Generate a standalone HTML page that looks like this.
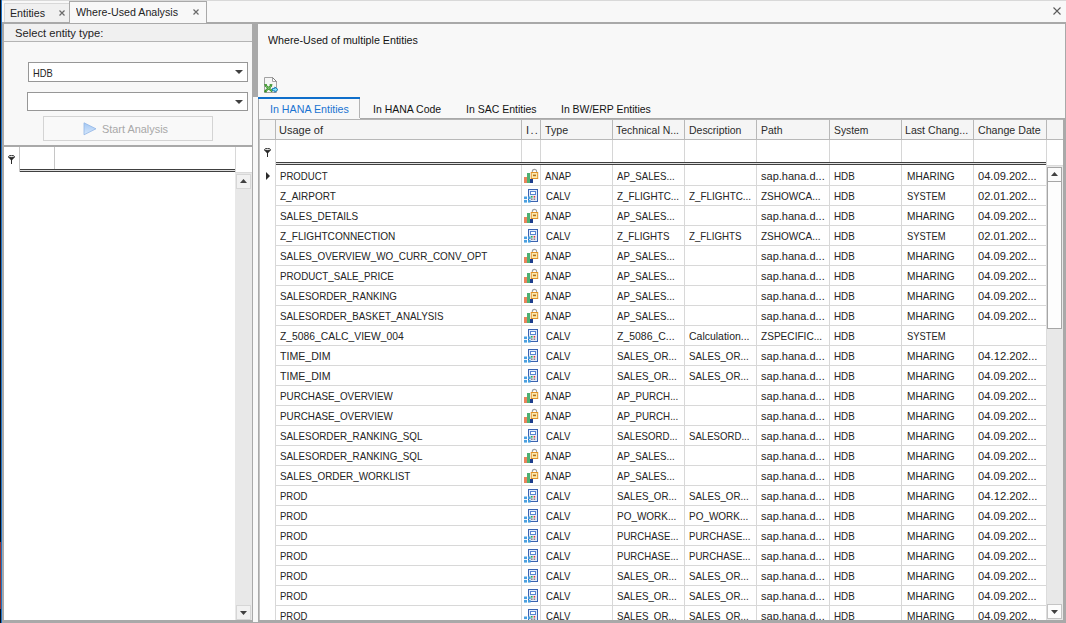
<!DOCTYPE html>
<html><head><meta charset="utf-8"><title>Where-Used Analysis</title>
<style>
*{box-sizing:border-box;margin:0;padding:0}
html,body{width:1066px;height:623px;overflow:hidden;background:#f8f8f8}
body{position:relative;font-family:"Liberation Sans",sans-serif;font-size:11px;color:#1c1c1c;line-height:13px}
.a{position:absolute}
.t{position:absolute;white-space:nowrap;height:13px;line-height:13px;transform-origin:0 50%;display:block}
</style></head><body>

<div class="a" style="left:0px;top:0px;width:1066px;height:1px;background:#d9d9d9;"></div>
<div class="a" style="left:0px;top:0px;width:1px;height:623px;background:#0a0c14;"></div>
<div class="a" style="left:0px;top:542px;width:1px;height:67px;background:#98302a;"></div>
<div class="a" style="left:1px;top:0px;width:1px;height:623px;background:#1f74c8;"></div>
<div class="a" style="left:4px;top:3px;width:65px;height:19px;background:#f0f0f0;border:1px solid #d8d8d8;border-bottom:none;border-right:none"></div>
<div class="a" style="left:69px;top:1px;width:138px;height:22px;background:#f8f8f8;border:1px solid #a9a9a9;border-bottom:none"></div>
<svg class="a" style="left:59px;top:10px" width="6" height="6" viewBox="0 0 6 6"><path d="M0.5 0.5L5.5 5.5M5.5 0.5L0.5 5.5" stroke="#6a6a6a" stroke-width="1.2" fill="none"/></svg>
<svg class="a" style="left:193px;top:9px" width="6" height="6" viewBox="0 0 6 6"><path d="M0.5 0.5L5.5 5.5M5.5 0.5L0.5 5.5" stroke="#6a6a6a" stroke-width="1.2" fill="none"/></svg>
<svg class="a" style="left:1053px;top:7px" width="8" height="8" viewBox="0 0 8 8"><path d="M0.5 0.5L7.5 7.5M7.5 0.5L0.5 7.5" stroke="#5a5a5a" stroke-width="1.1" fill="none"/></svg>
<div class="a" style="left:2px;top:22px;width:68px;height:2px;background:#a9a9a9;"></div>
<div class="a" style="left:70px;top:23px;width:136px;height:1px;background:#a9a9a9;"></div>
<div class="a" style="left:206px;top:22px;width:860px;height:2px;background:#a9a9a9;"></div>
<div class="a" style="left:2px;top:22px;width:2px;height:601px;background:#a9a9a9;"></div>
<div class="a" style="left:2px;top:620px;width:251px;height:3px;background:#a9a9a9;"></div>
<div class="a" style="left:253px;top:622px;width:5px;height:1px;background:#a9a9a9;"></div>
<div class="a" style="left:4px;top:24px;width:248px;height:17px;background:#f0f0f0;"></div>
<div class="a" style="left:4px;top:41px;width:248px;height:1px;background:#b4b4b4;"></div>
<div class="a" style="left:28px;top:62px;width:220px;height:20px;background:#ffffff;border:1px solid #979797"></div>
<svg class="a" style="left:235px;top:70px" width="8" height="4" viewBox="0 0 8 4"><path d="M0 0H8L4.0 4Z" fill="#404040"/></svg>
<div class="a" style="left:27px;top:92px;width:221px;height:19px;background:#ffffff;border:1px solid #979797"></div>
<svg class="a" style="left:235px;top:100px" width="8" height="4" viewBox="0 0 8 4"><path d="M0 0H8L4.0 4Z" fill="#404040"/></svg>
<div class="a" style="left:43px;top:116px;width:170px;height:25px;background:#f9f9f9;border:1px solid #d4d4d4"></div>
<svg class="a" style="left:83px;top:122px" width="14" height="14" viewBox="0 0 14 14"><defs><linearGradient id="pg" x1="0" y1="0" x2="0" y2="1"><stop offset="0" stop-color="#a4c8f4"/><stop offset="1" stop-color="#d6e7fb"/></linearGradient></defs><path d="M1 0.8L13 6.8L1 12.8Z" fill="url(#pg)" stroke="#93b6e6" stroke-width="0.8"/></svg>
<div class="a" style="left:4px;top:145px;width:248px;height:2px;background:#a9a9a9;"></div>
<div class="a" style="left:4px;top:147px;width:248px;height:473px;background:#ffffff;"></div>
<div class="a" style="left:19px;top:147px;width:1px;height:25px;background:#c6c6c6;"></div>
<div class="a" style="left:54px;top:147px;width:1px;height:25px;background:#c6c6c6;"></div>
<div class="a" style="left:235px;top:147px;width:1px;height:25px;background:#d8d8d8;"></div>
<div class="a" style="left:20px;top:169px;width:215px;height:1px;background:#404040;"></div>
<div class="a" style="left:20px;top:170px;width:215px;height:1px;background:#e0e0e0;"></div>
<div class="a" style="left:20px;top:171px;width:215px;height:1px;background:#404040;"></div>
<svg class="a" style="left:8px;top:155px" width="7" height="9" viewBox="0 0 7 9"><ellipse cx="3.5" cy="1.6" rx="3" ry="1.2" fill="#e8e8e8" stroke="#2a2a2a" stroke-width="0.9"/><path d="M0.2 1.9L3.5 5.6L6.8 1.9Q3.5 3.2 0.2 1.9Z" fill="#2a2a2a" stroke="#2a2a2a" stroke-width="0.4"/><rect x="3" y="4.4" width="1" height="4.6" fill="#2a2a2a"/></svg>
<div class="a" style="left:235px;top:172px;width:17px;height:448px;background:#e8e8e8;"></div>
<div class="a" style="left:235px;top:172px;width:17px;height:1px;background:#dadada;"></div>
<div class="a" style="left:236px;top:174px;width:15px;height:15px;background:#f1f1f1;border:1px solid #d6d6d6"></div>
<svg class="a" style="left:240px;top:179px" width="7" height="4" viewBox="0 0 7 4"><path d="M0 4H7L3.5 0Z" fill="#404040"/></svg>
<div class="a" style="left:236px;top:605px;width:15px;height:15px;background:#f1f1f1;border:1px solid #d6d6d6"></div>
<svg class="a" style="left:240px;top:611px" width="7" height="4" viewBox="0 0 7 4"><path d="M0 0H7L3.5 4Z" fill="#404040"/></svg>
<div class="a" style="left:252px;top:22px;width:1px;height:601px;background:#a9a9a9;"></div>
<div class="a" style="left:252px;top:24px;width:6px;height:73px;background:#a9a9a9;"></div>
<div class="a" style="left:258px;top:97px;width:1px;height:526px;background:#a9a9a9;"></div>
<div class="a" style="left:1065px;top:22px;width:1px;height:601px;background:#a9a9a9;"></div>
<svg class="a" style="left:263px;top:77px" width="16" height="16" viewBox="0 0 16 16"><path d="M1.5 0.5H9.5L13.5 4.5V15.5H1.5Z" fill="#f6f6f6" stroke="#a2a2a2" stroke-width="1"/><path d="M9.5 0.5V4.5H13.5" fill="#ffffff" stroke="#a2a2a2" stroke-width="1"/><path d="M9.5 0.5L13.5 4.5" stroke="#7c7c7c" stroke-width="1"/><path d="M2.2 8.2L9.4 14.4M8.6 8.2L2 14.4" stroke="#2c8a1c" stroke-width="2.1"/><path d="M1.2 7.8H4M6.6 7.8H9.4M1.2 14.7H3.8" stroke="#2c8a1c" stroke-width="1.1"/><path d="M2.8 8.8L8.8 13.9M8 8.8L2.8 13.8" stroke="#a6dc96" stroke-width="0.7"/><path d="M9.4 11.4H11.8V10L15 12.6L11.8 15.3V13.8H9.4Z" fill="#7fe6f7" stroke="#1a7ab8" stroke-width="1"/></svg>
<div class="a" style="left:258px;top:97px;width:102px;height:2px;background:#0f6fcb;"></div>
<div class="a" style="left:359px;top:99px;width:1px;height:19px;background:#b4b4b4;"></div>
<div class="a" style="left:360px;top:118px;width:706px;height:1px;background:#a9a9a9;"></div>
<div class="a" style="left:259px;top:119px;width:805px;height:1px;background:#b4b4b4;"></div>
<div class="a" style="left:259px;top:119px;width:1px;height:501px;background:#c4c4c4;"></div>
<div class="a" style="left:1063px;top:118px;width:3px;height:505px;background:#a9a9a9;"></div>
<div class="a" style="left:260px;top:120px;width:803px;height:19px;background:#f5f5f5;"></div>
<div class="a" style="left:260px;top:139px;width:803px;height:1px;background:#b8b8b8;"></div>
<div class="a" style="left:260px;top:140px;width:803px;height:25px;background:#ffffff;"></div>
<div class="a" style="left:260px;top:165px;width:786px;height:455px;background:#ffffff;"></div>
<div class="a" style="left:275px;top:120px;width:1px;height:19px;background:#b8b8b8;"></div>
<div class="a" style="left:275px;top:140px;width:1px;height:25px;background:#d6d6d6;"></div>
<div class="a" style="left:521px;top:120px;width:1px;height:19px;background:#b8b8b8;"></div>
<div class="a" style="left:521px;top:140px;width:1px;height:25px;background:#d6d6d6;"></div>
<div class="a" style="left:540px;top:120px;width:1px;height:19px;background:#b8b8b8;"></div>
<div class="a" style="left:540px;top:140px;width:1px;height:25px;background:#d6d6d6;"></div>
<div class="a" style="left:612px;top:120px;width:1px;height:19px;background:#b8b8b8;"></div>
<div class="a" style="left:612px;top:140px;width:1px;height:25px;background:#d6d6d6;"></div>
<div class="a" style="left:684px;top:120px;width:1px;height:19px;background:#b8b8b8;"></div>
<div class="a" style="left:684px;top:140px;width:1px;height:25px;background:#d6d6d6;"></div>
<div class="a" style="left:756px;top:120px;width:1px;height:19px;background:#b8b8b8;"></div>
<div class="a" style="left:756px;top:140px;width:1px;height:25px;background:#d6d6d6;"></div>
<div class="a" style="left:829px;top:120px;width:1px;height:19px;background:#b8b8b8;"></div>
<div class="a" style="left:829px;top:140px;width:1px;height:25px;background:#d6d6d6;"></div>
<div class="a" style="left:901px;top:120px;width:1px;height:19px;background:#b8b8b8;"></div>
<div class="a" style="left:901px;top:140px;width:1px;height:25px;background:#d6d6d6;"></div>
<div class="a" style="left:973px;top:120px;width:1px;height:19px;background:#b8b8b8;"></div>
<div class="a" style="left:973px;top:140px;width:1px;height:25px;background:#d6d6d6;"></div>
<div class="a" style="left:1046px;top:120px;width:1px;height:19px;background:#b8b8b8;"></div>
<div class="a" style="left:1046px;top:140px;width:1px;height:25px;background:#d6d6d6;"></div>
<div class="a" style="left:276px;top:162px;width:770px;height:1px;background:#404040;"></div>
<div class="a" style="left:276px;top:163px;width:770px;height:1px;background:#e0e0e0;"></div>
<div class="a" style="left:276px;top:164px;width:770px;height:1px;background:#404040;"></div>
<svg class="a" style="left:264px;top:148px" width="7" height="9" viewBox="0 0 7 9"><ellipse cx="3.5" cy="1.6" rx="3" ry="1.2" fill="#e8e8e8" stroke="#2a2a2a" stroke-width="0.9"/><path d="M0.2 1.9L3.5 5.6L6.8 1.9Q3.5 3.2 0.2 1.9Z" fill="#2a2a2a" stroke="#2a2a2a" stroke-width="0.4"/><rect x="3" y="4.4" width="1" height="4.6" fill="#2a2a2a"/></svg>
<svg class="a" style="left:266px;top:172px" width="4" height="8" viewBox="0 0 4 8"><path d="M0 0L4 4L0 8Z" fill="#2a2a2a"/></svg>
<svg class="a" style="left:523px;top:168px" width="16" height="16" viewBox="0 0 16 16"><rect x="1" y="9" width="3" height="6" fill="#e9835c"/><rect x="4" y="5" width="3" height="10" fill="#4fb072"/><rect x="7" y="11" width="3" height="4" fill="#1e3e8e"/><path d="M9.3 5V3.5a2.15 2.15 0 0 1 4.3 0V5" fill="none" stroke="#a0a0a0" stroke-width="1.1"/><rect x="8.2" y="4.5" width="6.5" height="6" fill="#fdeab0" stroke="#e0922c" stroke-width="1"/><rect x="10" y="6.6" width="3" height="1.6" fill="#b8741c"/></svg>
<div class="a" style="left:276px;top:185px;width:770px;height:1px;background:#d8d8d8;"></div>
<svg class="a" style="left:523px;top:188px" width="16" height="16" viewBox="0 0 16 16"><rect x="5.5" y="1.5" width="9" height="12" fill="#e4ecfa" stroke="#3a62b0" stroke-width="1"/><rect x="7.5" y="3.5" width="5" height="3" fill="#ffffff" stroke="#5a84d0" stroke-width="1"/><rect x="8" y="8" width="1.6" height="1.6" fill="#2fb34a"/><rect x="10.6" y="8" width="1.6" height="1.6" fill="#e03a3a"/><rect x="8" y="10.4" width="1.6" height="1.6" fill="#8a8a8a"/><rect x="10.6" y="10.4" width="1.6" height="1.6" fill="#8a8a8a"/><rect x="1" y="8.5" width="3" height="2.6" fill="#4aa0e0"/><rect x="5" y="8.5" width="2.6" height="2.6" fill="#4aa0e0"/><rect x="1" y="12" width="3" height="2.6" fill="#4aa0e0"/><rect x="5" y="12" width="2.6" height="2.6" fill="#4aa0e0"/></svg>
<div class="a" style="left:276px;top:205px;width:770px;height:1px;background:#d8d8d8;"></div>
<svg class="a" style="left:523px;top:208px" width="16" height="16" viewBox="0 0 16 16"><rect x="1" y="9" width="3" height="6" fill="#e9835c"/><rect x="4" y="5" width="3" height="10" fill="#4fb072"/><rect x="7" y="11" width="3" height="4" fill="#1e3e8e"/><path d="M9.3 5V3.5a2.15 2.15 0 0 1 4.3 0V5" fill="none" stroke="#a0a0a0" stroke-width="1.1"/><rect x="8.2" y="4.5" width="6.5" height="6" fill="#fdeab0" stroke="#e0922c" stroke-width="1"/><rect x="10" y="6.6" width="3" height="1.6" fill="#b8741c"/></svg>
<div class="a" style="left:276px;top:225px;width:770px;height:1px;background:#d8d8d8;"></div>
<svg class="a" style="left:523px;top:228px" width="16" height="16" viewBox="0 0 16 16"><rect x="5.5" y="1.5" width="9" height="12" fill="#e4ecfa" stroke="#3a62b0" stroke-width="1"/><rect x="7.5" y="3.5" width="5" height="3" fill="#ffffff" stroke="#5a84d0" stroke-width="1"/><rect x="8" y="8" width="1.6" height="1.6" fill="#2fb34a"/><rect x="10.6" y="8" width="1.6" height="1.6" fill="#e03a3a"/><rect x="8" y="10.4" width="1.6" height="1.6" fill="#8a8a8a"/><rect x="10.6" y="10.4" width="1.6" height="1.6" fill="#8a8a8a"/><rect x="1" y="8.5" width="3" height="2.6" fill="#4aa0e0"/><rect x="5" y="8.5" width="2.6" height="2.6" fill="#4aa0e0"/><rect x="1" y="12" width="3" height="2.6" fill="#4aa0e0"/><rect x="5" y="12" width="2.6" height="2.6" fill="#4aa0e0"/></svg>
<div class="a" style="left:276px;top:245px;width:770px;height:1px;background:#d8d8d8;"></div>
<svg class="a" style="left:523px;top:248px" width="16" height="16" viewBox="0 0 16 16"><rect x="1" y="9" width="3" height="6" fill="#e9835c"/><rect x="4" y="5" width="3" height="10" fill="#4fb072"/><rect x="7" y="11" width="3" height="4" fill="#1e3e8e"/><path d="M9.3 5V3.5a2.15 2.15 0 0 1 4.3 0V5" fill="none" stroke="#a0a0a0" stroke-width="1.1"/><rect x="8.2" y="4.5" width="6.5" height="6" fill="#fdeab0" stroke="#e0922c" stroke-width="1"/><rect x="10" y="6.6" width="3" height="1.6" fill="#b8741c"/></svg>
<div class="a" style="left:276px;top:265px;width:770px;height:1px;background:#d8d8d8;"></div>
<svg class="a" style="left:523px;top:268px" width="16" height="16" viewBox="0 0 16 16"><rect x="1" y="9" width="3" height="6" fill="#e9835c"/><rect x="4" y="5" width="3" height="10" fill="#4fb072"/><rect x="7" y="11" width="3" height="4" fill="#1e3e8e"/><path d="M9.3 5V3.5a2.15 2.15 0 0 1 4.3 0V5" fill="none" stroke="#a0a0a0" stroke-width="1.1"/><rect x="8.2" y="4.5" width="6.5" height="6" fill="#fdeab0" stroke="#e0922c" stroke-width="1"/><rect x="10" y="6.6" width="3" height="1.6" fill="#b8741c"/></svg>
<div class="a" style="left:276px;top:285px;width:770px;height:1px;background:#d8d8d8;"></div>
<svg class="a" style="left:523px;top:288px" width="16" height="16" viewBox="0 0 16 16"><rect x="1" y="9" width="3" height="6" fill="#e9835c"/><rect x="4" y="5" width="3" height="10" fill="#4fb072"/><rect x="7" y="11" width="3" height="4" fill="#1e3e8e"/><path d="M9.3 5V3.5a2.15 2.15 0 0 1 4.3 0V5" fill="none" stroke="#a0a0a0" stroke-width="1.1"/><rect x="8.2" y="4.5" width="6.5" height="6" fill="#fdeab0" stroke="#e0922c" stroke-width="1"/><rect x="10" y="6.6" width="3" height="1.6" fill="#b8741c"/></svg>
<div class="a" style="left:276px;top:305px;width:770px;height:1px;background:#d8d8d8;"></div>
<svg class="a" style="left:523px;top:308px" width="16" height="16" viewBox="0 0 16 16"><rect x="1" y="9" width="3" height="6" fill="#e9835c"/><rect x="4" y="5" width="3" height="10" fill="#4fb072"/><rect x="7" y="11" width="3" height="4" fill="#1e3e8e"/><path d="M9.3 5V3.5a2.15 2.15 0 0 1 4.3 0V5" fill="none" stroke="#a0a0a0" stroke-width="1.1"/><rect x="8.2" y="4.5" width="6.5" height="6" fill="#fdeab0" stroke="#e0922c" stroke-width="1"/><rect x="10" y="6.6" width="3" height="1.6" fill="#b8741c"/></svg>
<div class="a" style="left:276px;top:325px;width:770px;height:1px;background:#d8d8d8;"></div>
<svg class="a" style="left:523px;top:328px" width="16" height="16" viewBox="0 0 16 16"><rect x="5.5" y="1.5" width="9" height="12" fill="#e4ecfa" stroke="#3a62b0" stroke-width="1"/><rect x="7.5" y="3.5" width="5" height="3" fill="#ffffff" stroke="#5a84d0" stroke-width="1"/><rect x="8" y="8" width="1.6" height="1.6" fill="#2fb34a"/><rect x="10.6" y="8" width="1.6" height="1.6" fill="#e03a3a"/><rect x="8" y="10.4" width="1.6" height="1.6" fill="#8a8a8a"/><rect x="10.6" y="10.4" width="1.6" height="1.6" fill="#8a8a8a"/><rect x="1" y="8.5" width="3" height="2.6" fill="#4aa0e0"/><rect x="5" y="8.5" width="2.6" height="2.6" fill="#4aa0e0"/><rect x="1" y="12" width="3" height="2.6" fill="#4aa0e0"/><rect x="5" y="12" width="2.6" height="2.6" fill="#4aa0e0"/></svg>
<div class="a" style="left:276px;top:345px;width:770px;height:1px;background:#d8d8d8;"></div>
<svg class="a" style="left:523px;top:348px" width="16" height="16" viewBox="0 0 16 16"><rect x="5.5" y="1.5" width="9" height="12" fill="#e4ecfa" stroke="#3a62b0" stroke-width="1"/><rect x="7.5" y="3.5" width="5" height="3" fill="#ffffff" stroke="#5a84d0" stroke-width="1"/><rect x="8" y="8" width="1.6" height="1.6" fill="#2fb34a"/><rect x="10.6" y="8" width="1.6" height="1.6" fill="#e03a3a"/><rect x="8" y="10.4" width="1.6" height="1.6" fill="#8a8a8a"/><rect x="10.6" y="10.4" width="1.6" height="1.6" fill="#8a8a8a"/><rect x="1" y="8.5" width="3" height="2.6" fill="#4aa0e0"/><rect x="5" y="8.5" width="2.6" height="2.6" fill="#4aa0e0"/><rect x="1" y="12" width="3" height="2.6" fill="#4aa0e0"/><rect x="5" y="12" width="2.6" height="2.6" fill="#4aa0e0"/></svg>
<div class="a" style="left:276px;top:365px;width:770px;height:1px;background:#d8d8d8;"></div>
<svg class="a" style="left:523px;top:368px" width="16" height="16" viewBox="0 0 16 16"><rect x="5.5" y="1.5" width="9" height="12" fill="#e4ecfa" stroke="#3a62b0" stroke-width="1"/><rect x="7.5" y="3.5" width="5" height="3" fill="#ffffff" stroke="#5a84d0" stroke-width="1"/><rect x="8" y="8" width="1.6" height="1.6" fill="#2fb34a"/><rect x="10.6" y="8" width="1.6" height="1.6" fill="#e03a3a"/><rect x="8" y="10.4" width="1.6" height="1.6" fill="#8a8a8a"/><rect x="10.6" y="10.4" width="1.6" height="1.6" fill="#8a8a8a"/><rect x="1" y="8.5" width="3" height="2.6" fill="#4aa0e0"/><rect x="5" y="8.5" width="2.6" height="2.6" fill="#4aa0e0"/><rect x="1" y="12" width="3" height="2.6" fill="#4aa0e0"/><rect x="5" y="12" width="2.6" height="2.6" fill="#4aa0e0"/></svg>
<div class="a" style="left:276px;top:385px;width:770px;height:1px;background:#d8d8d8;"></div>
<svg class="a" style="left:523px;top:388px" width="16" height="16" viewBox="0 0 16 16"><rect x="1" y="9" width="3" height="6" fill="#e9835c"/><rect x="4" y="5" width="3" height="10" fill="#4fb072"/><rect x="7" y="11" width="3" height="4" fill="#1e3e8e"/><path d="M9.3 5V3.5a2.15 2.15 0 0 1 4.3 0V5" fill="none" stroke="#a0a0a0" stroke-width="1.1"/><rect x="8.2" y="4.5" width="6.5" height="6" fill="#fdeab0" stroke="#e0922c" stroke-width="1"/><rect x="10" y="6.6" width="3" height="1.6" fill="#b8741c"/></svg>
<div class="a" style="left:276px;top:405px;width:770px;height:1px;background:#d8d8d8;"></div>
<svg class="a" style="left:523px;top:408px" width="16" height="16" viewBox="0 0 16 16"><rect x="1" y="9" width="3" height="6" fill="#e9835c"/><rect x="4" y="5" width="3" height="10" fill="#4fb072"/><rect x="7" y="11" width="3" height="4" fill="#1e3e8e"/><path d="M9.3 5V3.5a2.15 2.15 0 0 1 4.3 0V5" fill="none" stroke="#a0a0a0" stroke-width="1.1"/><rect x="8.2" y="4.5" width="6.5" height="6" fill="#fdeab0" stroke="#e0922c" stroke-width="1"/><rect x="10" y="6.6" width="3" height="1.6" fill="#b8741c"/></svg>
<div class="a" style="left:276px;top:425px;width:770px;height:1px;background:#d8d8d8;"></div>
<svg class="a" style="left:523px;top:428px" width="16" height="16" viewBox="0 0 16 16"><rect x="5.5" y="1.5" width="9" height="12" fill="#e4ecfa" stroke="#3a62b0" stroke-width="1"/><rect x="7.5" y="3.5" width="5" height="3" fill="#ffffff" stroke="#5a84d0" stroke-width="1"/><rect x="8" y="8" width="1.6" height="1.6" fill="#2fb34a"/><rect x="10.6" y="8" width="1.6" height="1.6" fill="#e03a3a"/><rect x="8" y="10.4" width="1.6" height="1.6" fill="#8a8a8a"/><rect x="10.6" y="10.4" width="1.6" height="1.6" fill="#8a8a8a"/><rect x="1" y="8.5" width="3" height="2.6" fill="#4aa0e0"/><rect x="5" y="8.5" width="2.6" height="2.6" fill="#4aa0e0"/><rect x="1" y="12" width="3" height="2.6" fill="#4aa0e0"/><rect x="5" y="12" width="2.6" height="2.6" fill="#4aa0e0"/></svg>
<div class="a" style="left:276px;top:445px;width:770px;height:1px;background:#d8d8d8;"></div>
<svg class="a" style="left:523px;top:448px" width="16" height="16" viewBox="0 0 16 16"><rect x="1" y="9" width="3" height="6" fill="#e9835c"/><rect x="4" y="5" width="3" height="10" fill="#4fb072"/><rect x="7" y="11" width="3" height="4" fill="#1e3e8e"/><path d="M9.3 5V3.5a2.15 2.15 0 0 1 4.3 0V5" fill="none" stroke="#a0a0a0" stroke-width="1.1"/><rect x="8.2" y="4.5" width="6.5" height="6" fill="#fdeab0" stroke="#e0922c" stroke-width="1"/><rect x="10" y="6.6" width="3" height="1.6" fill="#b8741c"/></svg>
<div class="a" style="left:276px;top:465px;width:770px;height:1px;background:#d8d8d8;"></div>
<svg class="a" style="left:523px;top:468px" width="16" height="16" viewBox="0 0 16 16"><rect x="1" y="9" width="3" height="6" fill="#e9835c"/><rect x="4" y="5" width="3" height="10" fill="#4fb072"/><rect x="7" y="11" width="3" height="4" fill="#1e3e8e"/><path d="M9.3 5V3.5a2.15 2.15 0 0 1 4.3 0V5" fill="none" stroke="#a0a0a0" stroke-width="1.1"/><rect x="8.2" y="4.5" width="6.5" height="6" fill="#fdeab0" stroke="#e0922c" stroke-width="1"/><rect x="10" y="6.6" width="3" height="1.6" fill="#b8741c"/></svg>
<div class="a" style="left:276px;top:485px;width:770px;height:1px;background:#d8d8d8;"></div>
<svg class="a" style="left:523px;top:488px" width="16" height="16" viewBox="0 0 16 16"><rect x="5.5" y="1.5" width="9" height="12" fill="#e4ecfa" stroke="#3a62b0" stroke-width="1"/><rect x="7.5" y="3.5" width="5" height="3" fill="#ffffff" stroke="#5a84d0" stroke-width="1"/><rect x="8" y="8" width="1.6" height="1.6" fill="#2fb34a"/><rect x="10.6" y="8" width="1.6" height="1.6" fill="#e03a3a"/><rect x="8" y="10.4" width="1.6" height="1.6" fill="#8a8a8a"/><rect x="10.6" y="10.4" width="1.6" height="1.6" fill="#8a8a8a"/><rect x="1" y="8.5" width="3" height="2.6" fill="#4aa0e0"/><rect x="5" y="8.5" width="2.6" height="2.6" fill="#4aa0e0"/><rect x="1" y="12" width="3" height="2.6" fill="#4aa0e0"/><rect x="5" y="12" width="2.6" height="2.6" fill="#4aa0e0"/></svg>
<div class="a" style="left:276px;top:505px;width:770px;height:1px;background:#d8d8d8;"></div>
<svg class="a" style="left:523px;top:508px" width="16" height="16" viewBox="0 0 16 16"><rect x="5.5" y="1.5" width="9" height="12" fill="#e4ecfa" stroke="#3a62b0" stroke-width="1"/><rect x="7.5" y="3.5" width="5" height="3" fill="#ffffff" stroke="#5a84d0" stroke-width="1"/><rect x="8" y="8" width="1.6" height="1.6" fill="#2fb34a"/><rect x="10.6" y="8" width="1.6" height="1.6" fill="#e03a3a"/><rect x="8" y="10.4" width="1.6" height="1.6" fill="#8a8a8a"/><rect x="10.6" y="10.4" width="1.6" height="1.6" fill="#8a8a8a"/><rect x="1" y="8.5" width="3" height="2.6" fill="#4aa0e0"/><rect x="5" y="8.5" width="2.6" height="2.6" fill="#4aa0e0"/><rect x="1" y="12" width="3" height="2.6" fill="#4aa0e0"/><rect x="5" y="12" width="2.6" height="2.6" fill="#4aa0e0"/></svg>
<div class="a" style="left:276px;top:525px;width:770px;height:1px;background:#d8d8d8;"></div>
<svg class="a" style="left:523px;top:528px" width="16" height="16" viewBox="0 0 16 16"><rect x="5.5" y="1.5" width="9" height="12" fill="#e4ecfa" stroke="#3a62b0" stroke-width="1"/><rect x="7.5" y="3.5" width="5" height="3" fill="#ffffff" stroke="#5a84d0" stroke-width="1"/><rect x="8" y="8" width="1.6" height="1.6" fill="#2fb34a"/><rect x="10.6" y="8" width="1.6" height="1.6" fill="#e03a3a"/><rect x="8" y="10.4" width="1.6" height="1.6" fill="#8a8a8a"/><rect x="10.6" y="10.4" width="1.6" height="1.6" fill="#8a8a8a"/><rect x="1" y="8.5" width="3" height="2.6" fill="#4aa0e0"/><rect x="5" y="8.5" width="2.6" height="2.6" fill="#4aa0e0"/><rect x="1" y="12" width="3" height="2.6" fill="#4aa0e0"/><rect x="5" y="12" width="2.6" height="2.6" fill="#4aa0e0"/></svg>
<div class="a" style="left:276px;top:545px;width:770px;height:1px;background:#d8d8d8;"></div>
<svg class="a" style="left:523px;top:548px" width="16" height="16" viewBox="0 0 16 16"><rect x="5.5" y="1.5" width="9" height="12" fill="#e4ecfa" stroke="#3a62b0" stroke-width="1"/><rect x="7.5" y="3.5" width="5" height="3" fill="#ffffff" stroke="#5a84d0" stroke-width="1"/><rect x="8" y="8" width="1.6" height="1.6" fill="#2fb34a"/><rect x="10.6" y="8" width="1.6" height="1.6" fill="#e03a3a"/><rect x="8" y="10.4" width="1.6" height="1.6" fill="#8a8a8a"/><rect x="10.6" y="10.4" width="1.6" height="1.6" fill="#8a8a8a"/><rect x="1" y="8.5" width="3" height="2.6" fill="#4aa0e0"/><rect x="5" y="8.5" width="2.6" height="2.6" fill="#4aa0e0"/><rect x="1" y="12" width="3" height="2.6" fill="#4aa0e0"/><rect x="5" y="12" width="2.6" height="2.6" fill="#4aa0e0"/></svg>
<div class="a" style="left:276px;top:565px;width:770px;height:1px;background:#d8d8d8;"></div>
<svg class="a" style="left:523px;top:568px" width="16" height="16" viewBox="0 0 16 16"><rect x="5.5" y="1.5" width="9" height="12" fill="#e4ecfa" stroke="#3a62b0" stroke-width="1"/><rect x="7.5" y="3.5" width="5" height="3" fill="#ffffff" stroke="#5a84d0" stroke-width="1"/><rect x="8" y="8" width="1.6" height="1.6" fill="#2fb34a"/><rect x="10.6" y="8" width="1.6" height="1.6" fill="#e03a3a"/><rect x="8" y="10.4" width="1.6" height="1.6" fill="#8a8a8a"/><rect x="10.6" y="10.4" width="1.6" height="1.6" fill="#8a8a8a"/><rect x="1" y="8.5" width="3" height="2.6" fill="#4aa0e0"/><rect x="5" y="8.5" width="2.6" height="2.6" fill="#4aa0e0"/><rect x="1" y="12" width="3" height="2.6" fill="#4aa0e0"/><rect x="5" y="12" width="2.6" height="2.6" fill="#4aa0e0"/></svg>
<div class="a" style="left:276px;top:585px;width:770px;height:1px;background:#d8d8d8;"></div>
<svg class="a" style="left:523px;top:588px" width="16" height="16" viewBox="0 0 16 16"><rect x="5.5" y="1.5" width="9" height="12" fill="#e4ecfa" stroke="#3a62b0" stroke-width="1"/><rect x="7.5" y="3.5" width="5" height="3" fill="#ffffff" stroke="#5a84d0" stroke-width="1"/><rect x="8" y="8" width="1.6" height="1.6" fill="#2fb34a"/><rect x="10.6" y="8" width="1.6" height="1.6" fill="#e03a3a"/><rect x="8" y="10.4" width="1.6" height="1.6" fill="#8a8a8a"/><rect x="10.6" y="10.4" width="1.6" height="1.6" fill="#8a8a8a"/><rect x="1" y="8.5" width="3" height="2.6" fill="#4aa0e0"/><rect x="5" y="8.5" width="2.6" height="2.6" fill="#4aa0e0"/><rect x="1" y="12" width="3" height="2.6" fill="#4aa0e0"/><rect x="5" y="12" width="2.6" height="2.6" fill="#4aa0e0"/></svg>
<div class="a" style="left:276px;top:605px;width:770px;height:1px;background:#d8d8d8;"></div>
<svg class="a" style="left:523px;top:608px" width="16" height="16" viewBox="0 0 16 16"><rect x="5.5" y="1.5" width="9" height="12" fill="#e4ecfa" stroke="#3a62b0" stroke-width="1"/><rect x="7.5" y="3.5" width="5" height="3" fill="#ffffff" stroke="#5a84d0" stroke-width="1"/><rect x="8" y="8" width="1.6" height="1.6" fill="#2fb34a"/><rect x="10.6" y="8" width="1.6" height="1.6" fill="#e03a3a"/><rect x="8" y="10.4" width="1.6" height="1.6" fill="#8a8a8a"/><rect x="10.6" y="10.4" width="1.6" height="1.6" fill="#8a8a8a"/><rect x="1" y="8.5" width="3" height="2.6" fill="#4aa0e0"/><rect x="5" y="8.5" width="2.6" height="2.6" fill="#4aa0e0"/><rect x="1" y="12" width="3" height="2.6" fill="#4aa0e0"/><rect x="5" y="12" width="2.6" height="2.6" fill="#4aa0e0"/></svg>
<div class="a" style="left:275px;top:165px;width:1px;height:455px;background:#d8d8d8;"></div>
<div class="a" style="left:521px;top:165px;width:1px;height:455px;background:#d8d8d8;"></div>
<div class="a" style="left:540px;top:165px;width:1px;height:455px;background:#d8d8d8;"></div>
<div class="a" style="left:612px;top:165px;width:1px;height:455px;background:#d8d8d8;"></div>
<div class="a" style="left:684px;top:165px;width:1px;height:455px;background:#d8d8d8;"></div>
<div class="a" style="left:756px;top:165px;width:1px;height:455px;background:#d8d8d8;"></div>
<div class="a" style="left:829px;top:165px;width:1px;height:455px;background:#d8d8d8;"></div>
<div class="a" style="left:901px;top:165px;width:1px;height:455px;background:#d8d8d8;"></div>
<div class="a" style="left:973px;top:165px;width:1px;height:455px;background:#d8d8d8;"></div>
<div class="a" style="left:1046px;top:165px;width:17px;height:455px;background:#e8e8e8;"></div>
<div class="a" style="left:1046px;top:165px;width:17px;height:1px;background:#dadada;"></div>
<div class="a" style="left:1047px;top:167px;width:15px;height:15px;background:#fbfbfb;border:1px solid #a6a6a6"></div>
<svg class="a" style="left:1051px;top:172px" width="7" height="4" viewBox="0 0 7 4"><path d="M0 4H7L3.5 0Z" fill="#404040"/></svg>
<div class="a" style="left:1047px;top:604px;width:15px;height:15px;background:#fcfcfc;border:1px solid #c4c4c4"></div>
<svg class="a" style="left:1051px;top:610px" width="7" height="4" viewBox="0 0 7 4"><path d="M0 0H7L3.5 4Z" fill="#404040"/></svg>
<div class="a" style="left:1047px;top:181px;width:15px;height:148px;background:#fdfdfd;border:1px solid #a6a6a6"></div>
<div class="a" style="left:1046px;top:165px;width:1px;height:455px;background:#dcdcdc;"></div>
<div class="a" style="left:258px;top:620px;width:808px;height:3px;background:#a9a9a9;"></div>
<span class="t" style="left:9.70px;top:7px;color:#242424;transform:scaleX(0.9701)">Entities</span>
<span class="t" style="left:76.40px;top:6px;color:#242424;transform:scaleX(0.9700)">Where-Used Analysis</span>
<span class="t" style="left:14.50px;top:27px;color:#242424;transform:scaleX(1.0169)">Select entity type:</span>
<span class="t" style="left:32.50px;top:67px;color:#242424;transform:scaleX(0.8478)">HDB</span>
<span class="t" style="left:102.40px;top:123px;color:#a8a8a8;transform:scaleX(0.9904)">Start Analysis</span>
<span class="t" style="left:267.60px;top:34px;color:#141414;transform:scaleX(0.9730)">Where-Used of multiple Entities</span>
<span class="t" style="left:269.50px;top:103px;color:#1b74d1;transform:scaleX(0.9701)">In HANA Entities</span>
<span class="t" style="left:372.80px;top:103px;color:#141414;transform:scaleX(0.9532)">In HANA Code</span>
<span class="t" style="left:465.80px;top:103px;color:#141414;transform:scaleX(0.9543)">In SAC Entities</span>
<span class="t" style="left:560.60px;top:103px;color:#141414;transform:scaleX(0.9496)">In BW/ERP Entities</span>
<span class="t" style="left:279.20px;top:124px;color:#2b2b2b;transform:scaleX(0.9987)">Usage of</span>
<span class="t" style="left:526.10px;top:124px;color:#2b2b2b;transform:scaleX(1.0000);letter-spacing:1.3px">I..</span>
<span class="t" style="left:545.20px;top:124px;color:#2b2b2b;transform:scaleX(0.9681)">Type</span>
<span class="t" style="left:616.20px;top:124px;color:#2b2b2b;transform:scaleX(0.9540)">Technical N...</span>
<span class="t" style="left:688.70px;top:124px;color:#2b2b2b;transform:scaleX(0.9521)">Description</span>
<span class="t" style="left:760.50px;top:124px;color:#2b2b2b;transform:scaleX(0.9495)">Path</span>
<span class="t" style="left:833.70px;top:124px;color:#2b2b2b;transform:scaleX(0.9377)">System</span>
<span class="t" style="left:905.30px;top:124px;color:#2b2b2b;transform:scaleX(0.9642)">Last Chang...</span>
<span class="t" style="left:977.50px;top:124px;color:#2b2b2b;transform:scaleX(0.9671)">Change Date</span>
<span class="t" style="left:280.30px;top:170px;color:#242424;transform:scaleX(0.8733)">PRODUCT</span>
<span class="t" style="left:545.20px;top:170px;color:#242424;transform:scaleX(0.8775)">ANAP</span>
<span class="t" style="left:617.10px;top:170px;color:#242424;transform:scaleX(0.8802)">AP_SALES...</span>
<span class="t" style="left:760.70px;top:170px;color:#242424;transform:scaleX(1.0014)">sap.hana.d...</span>
<span class="t" style="left:834.30px;top:170px;color:#242424;transform:scaleX(0.8951)">HDB</span>
<span class="t" style="left:906.60px;top:170px;color:#242424;transform:scaleX(0.9181)">MHARING</span>
<span class="t" style="left:977.90px;top:170px;color:#242424;transform:scaleX(1.0101)">04.09.202...</span>
<span class="t" style="left:280.30px;top:190px;color:#242424;transform:scaleX(0.9068)">Z_AIRPORT</span>
<span class="t" style="left:545.60px;top:190px;color:#242424;transform:scaleX(0.8738)">CALV</span>
<span class="t" style="left:617.10px;top:190px;color:#242424;transform:scaleX(0.8991)">Z_FLIGHTC...</span>
<span class="t" style="left:689.10px;top:190px;color:#242424;transform:scaleX(0.8991)">Z_FLIGHTC...</span>
<span class="t" style="left:760.90px;top:190px;color:#242424;transform:scaleX(0.9114)">ZSHOWCA...</span>
<span class="t" style="left:834.30px;top:190px;color:#242424;transform:scaleX(0.8951)">HDB</span>
<span class="t" style="left:906.60px;top:190px;color:#242424;transform:scaleX(0.8512)">SYSTEM</span>
<span class="t" style="left:977.90px;top:190px;color:#242424;transform:scaleX(1.0101)">02.01.202...</span>
<span class="t" style="left:280.30px;top:210px;color:#242424;transform:scaleX(0.9027)">SALES_DETAILS</span>
<span class="t" style="left:545.20px;top:210px;color:#242424;transform:scaleX(0.8775)">ANAP</span>
<span class="t" style="left:617.10px;top:210px;color:#242424;transform:scaleX(0.8802)">AP_SALES...</span>
<span class="t" style="left:760.70px;top:210px;color:#242424;transform:scaleX(1.0014)">sap.hana.d...</span>
<span class="t" style="left:834.30px;top:210px;color:#242424;transform:scaleX(0.8951)">HDB</span>
<span class="t" style="left:906.60px;top:210px;color:#242424;transform:scaleX(0.9181)">MHARING</span>
<span class="t" style="left:977.90px;top:210px;color:#242424;transform:scaleX(1.0101)">04.09.202...</span>
<span class="t" style="left:280.30px;top:230px;color:#242424;transform:scaleX(0.9166)">Z_FLIGHTCONNECTION</span>
<span class="t" style="left:545.60px;top:230px;color:#242424;transform:scaleX(0.8738)">CALV</span>
<span class="t" style="left:617.00px;top:230px;color:#242424;transform:scaleX(0.8853)">Z_FLIGHTS</span>
<span class="t" style="left:689.00px;top:230px;color:#242424;transform:scaleX(0.8853)">Z_FLIGHTS</span>
<span class="t" style="left:760.90px;top:230px;color:#242424;transform:scaleX(0.9114)">ZSHOWCA...</span>
<span class="t" style="left:834.30px;top:230px;color:#242424;transform:scaleX(0.8951)">HDB</span>
<span class="t" style="left:906.60px;top:230px;color:#242424;transform:scaleX(0.8512)">SYSTEM</span>
<span class="t" style="left:977.90px;top:230px;color:#242424;transform:scaleX(1.0101)">02.01.202...</span>
<span class="t" style="left:280.30px;top:250px;color:#242424;transform:scaleX(0.9008)">SALES_OVERVIEW_WO_CURR_CONV_OPT</span>
<span class="t" style="left:545.20px;top:250px;color:#242424;transform:scaleX(0.8775)">ANAP</span>
<span class="t" style="left:617.10px;top:250px;color:#242424;transform:scaleX(0.8802)">AP_SALES...</span>
<span class="t" style="left:760.70px;top:250px;color:#242424;transform:scaleX(1.0014)">sap.hana.d...</span>
<span class="t" style="left:834.30px;top:250px;color:#242424;transform:scaleX(0.8951)">HDB</span>
<span class="t" style="left:906.60px;top:250px;color:#242424;transform:scaleX(0.9181)">MHARING</span>
<span class="t" style="left:977.90px;top:250px;color:#242424;transform:scaleX(1.0101)">04.09.202...</span>
<span class="t" style="left:280.30px;top:270px;color:#242424;transform:scaleX(0.8864)">PRODUCT_SALE_PRICE</span>
<span class="t" style="left:545.20px;top:270px;color:#242424;transform:scaleX(0.8775)">ANAP</span>
<span class="t" style="left:617.10px;top:270px;color:#242424;transform:scaleX(0.8802)">AP_SALES...</span>
<span class="t" style="left:760.70px;top:270px;color:#242424;transform:scaleX(1.0014)">sap.hana.d...</span>
<span class="t" style="left:834.30px;top:270px;color:#242424;transform:scaleX(0.8951)">HDB</span>
<span class="t" style="left:906.60px;top:270px;color:#242424;transform:scaleX(0.9181)">MHARING</span>
<span class="t" style="left:977.90px;top:270px;color:#242424;transform:scaleX(1.0101)">04.09.202...</span>
<span class="t" style="left:280.30px;top:290px;color:#242424;transform:scaleX(0.8894)">SALESORDER_RANKING</span>
<span class="t" style="left:545.20px;top:290px;color:#242424;transform:scaleX(0.8775)">ANAP</span>
<span class="t" style="left:617.10px;top:290px;color:#242424;transform:scaleX(0.8802)">AP_SALES...</span>
<span class="t" style="left:760.70px;top:290px;color:#242424;transform:scaleX(1.0014)">sap.hana.d...</span>
<span class="t" style="left:834.30px;top:290px;color:#242424;transform:scaleX(0.8951)">HDB</span>
<span class="t" style="left:906.60px;top:290px;color:#242424;transform:scaleX(0.9181)">MHARING</span>
<span class="t" style="left:977.90px;top:290px;color:#242424;transform:scaleX(1.0101)">04.09.202...</span>
<span class="t" style="left:280.30px;top:310px;color:#242424;transform:scaleX(0.8894)">SALESORDER_BASKET_ANALYSIS</span>
<span class="t" style="left:545.20px;top:310px;color:#242424;transform:scaleX(0.8775)">ANAP</span>
<span class="t" style="left:617.10px;top:310px;color:#242424;transform:scaleX(0.8802)">AP_SALES...</span>
<span class="t" style="left:760.70px;top:310px;color:#242424;transform:scaleX(1.0014)">sap.hana.d...</span>
<span class="t" style="left:834.30px;top:310px;color:#242424;transform:scaleX(0.8951)">HDB</span>
<span class="t" style="left:906.60px;top:310px;color:#242424;transform:scaleX(0.9181)">MHARING</span>
<span class="t" style="left:977.90px;top:310px;color:#242424;transform:scaleX(1.0101)">04.09.202...</span>
<span class="t" style="left:280.30px;top:330px;color:#242424;transform:scaleX(0.9409)">Z_5086_CALC_VIEW_004</span>
<span class="t" style="left:545.60px;top:330px;color:#242424;transform:scaleX(0.8738)">CALV</span>
<span class="t" style="left:617.10px;top:330px;color:#242424;transform:scaleX(0.9513)">Z_5086_C...</span>
<span class="t" style="left:688.70px;top:330px;color:#242424;transform:scaleX(0.9513)">Calculation...</span>
<span class="t" style="left:760.70px;top:330px;color:#242424;transform:scaleX(0.9170)">ZSPECIFIC...</span>
<span class="t" style="left:834.30px;top:330px;color:#242424;transform:scaleX(0.8951)">HDB</span>
<span class="t" style="left:906.60px;top:330px;color:#242424;transform:scaleX(0.8512)">SYSTEM</span>
<span class="t" style="left:280.30px;top:350px;color:#242424;transform:scaleX(0.9627)">TIME_DIM</span>
<span class="t" style="left:545.60px;top:350px;color:#242424;transform:scaleX(0.8738)">CALV</span>
<span class="t" style="left:616.70px;top:350px;color:#242424;transform:scaleX(0.8860)">SALES_OR...</span>
<span class="t" style="left:688.70px;top:350px;color:#242424;transform:scaleX(0.8860)">SALES_OR...</span>
<span class="t" style="left:760.70px;top:350px;color:#242424;transform:scaleX(1.0014)">sap.hana.d...</span>
<span class="t" style="left:834.30px;top:350px;color:#242424;transform:scaleX(0.8951)">HDB</span>
<span class="t" style="left:906.60px;top:350px;color:#242424;transform:scaleX(0.9181)">MHARING</span>
<span class="t" style="left:977.70px;top:350px;color:#242424;transform:scaleX(1.0239)">04.12.202...</span>
<span class="t" style="left:280.30px;top:370px;color:#242424;transform:scaleX(0.9627)">TIME_DIM</span>
<span class="t" style="left:545.60px;top:370px;color:#242424;transform:scaleX(0.8738)">CALV</span>
<span class="t" style="left:616.70px;top:370px;color:#242424;transform:scaleX(0.8860)">SALES_OR...</span>
<span class="t" style="left:688.70px;top:370px;color:#242424;transform:scaleX(0.8860)">SALES_OR...</span>
<span class="t" style="left:760.70px;top:370px;color:#242424;transform:scaleX(1.0014)">sap.hana.d...</span>
<span class="t" style="left:834.30px;top:370px;color:#242424;transform:scaleX(0.8951)">HDB</span>
<span class="t" style="left:906.60px;top:370px;color:#242424;transform:scaleX(0.9181)">MHARING</span>
<span class="t" style="left:977.90px;top:370px;color:#242424;transform:scaleX(1.0101)">04.09.202...</span>
<span class="t" style="left:280.30px;top:390px;color:#242424;transform:scaleX(0.8921)">PURCHASE_OVERVIEW</span>
<span class="t" style="left:545.20px;top:390px;color:#242424;transform:scaleX(0.8775)">ANAP</span>
<span class="t" style="left:617.10px;top:390px;color:#242424;transform:scaleX(0.8874)">AP_PURCH...</span>
<span class="t" style="left:760.70px;top:390px;color:#242424;transform:scaleX(1.0014)">sap.hana.d...</span>
<span class="t" style="left:834.30px;top:390px;color:#242424;transform:scaleX(0.8951)">HDB</span>
<span class="t" style="left:906.60px;top:390px;color:#242424;transform:scaleX(0.9181)">MHARING</span>
<span class="t" style="left:977.90px;top:390px;color:#242424;transform:scaleX(1.0101)">04.09.202...</span>
<span class="t" style="left:280.30px;top:410px;color:#242424;transform:scaleX(0.8921)">PURCHASE_OVERVIEW</span>
<span class="t" style="left:545.20px;top:410px;color:#242424;transform:scaleX(0.8775)">ANAP</span>
<span class="t" style="left:617.10px;top:410px;color:#242424;transform:scaleX(0.8874)">AP_PURCH...</span>
<span class="t" style="left:760.70px;top:410px;color:#242424;transform:scaleX(1.0014)">sap.hana.d...</span>
<span class="t" style="left:834.30px;top:410px;color:#242424;transform:scaleX(0.8951)">HDB</span>
<span class="t" style="left:906.60px;top:410px;color:#242424;transform:scaleX(0.9181)">MHARING</span>
<span class="t" style="left:977.90px;top:410px;color:#242424;transform:scaleX(1.0101)">04.09.202...</span>
<span class="t" style="left:280.30px;top:430px;color:#242424;transform:scaleX(0.8924)">SALESORDER_RANKING_SQL</span>
<span class="t" style="left:545.60px;top:430px;color:#242424;transform:scaleX(0.8738)">CALV</span>
<span class="t" style="left:616.70px;top:430px;color:#242424;transform:scaleX(0.8743)">SALESORD...</span>
<span class="t" style="left:688.70px;top:430px;color:#242424;transform:scaleX(0.8743)">SALESORD...</span>
<span class="t" style="left:760.70px;top:430px;color:#242424;transform:scaleX(1.0014)">sap.hana.d...</span>
<span class="t" style="left:834.30px;top:430px;color:#242424;transform:scaleX(0.8951)">HDB</span>
<span class="t" style="left:906.60px;top:430px;color:#242424;transform:scaleX(0.9181)">MHARING</span>
<span class="t" style="left:977.90px;top:430px;color:#242424;transform:scaleX(1.0101)">04.09.202...</span>
<span class="t" style="left:280.30px;top:450px;color:#242424;transform:scaleX(0.8924)">SALESORDER_RANKING_SQL</span>
<span class="t" style="left:545.20px;top:450px;color:#242424;transform:scaleX(0.8775)">ANAP</span>
<span class="t" style="left:617.10px;top:450px;color:#242424;transform:scaleX(0.8802)">AP_SALES...</span>
<span class="t" style="left:760.70px;top:450px;color:#242424;transform:scaleX(1.0014)">sap.hana.d...</span>
<span class="t" style="left:834.30px;top:450px;color:#242424;transform:scaleX(0.8951)">HDB</span>
<span class="t" style="left:906.60px;top:450px;color:#242424;transform:scaleX(0.9181)">MHARING</span>
<span class="t" style="left:977.90px;top:450px;color:#242424;transform:scaleX(1.0101)">04.09.202...</span>
<span class="t" style="left:280.30px;top:470px;color:#242424;transform:scaleX(0.9001)">SALES_ORDER_WORKLIST</span>
<span class="t" style="left:545.20px;top:470px;color:#242424;transform:scaleX(0.8775)">ANAP</span>
<span class="t" style="left:617.10px;top:470px;color:#242424;transform:scaleX(0.8802)">AP_SALES...</span>
<span class="t" style="left:760.70px;top:470px;color:#242424;transform:scaleX(1.0014)">sap.hana.d...</span>
<span class="t" style="left:834.30px;top:470px;color:#242424;transform:scaleX(0.8951)">HDB</span>
<span class="t" style="left:906.60px;top:470px;color:#242424;transform:scaleX(0.9181)">MHARING</span>
<span class="t" style="left:977.90px;top:470px;color:#242424;transform:scaleX(1.0101)">04.09.202...</span>
<span class="t" style="left:280.30px;top:490px;color:#242424;transform:scaleX(0.8622)">PROD</span>
<span class="t" style="left:545.60px;top:490px;color:#242424;transform:scaleX(0.8738)">CALV</span>
<span class="t" style="left:616.70px;top:490px;color:#242424;transform:scaleX(0.8860)">SALES_OR...</span>
<span class="t" style="left:688.70px;top:490px;color:#242424;transform:scaleX(0.8860)">SALES_OR...</span>
<span class="t" style="left:760.70px;top:490px;color:#242424;transform:scaleX(1.0014)">sap.hana.d...</span>
<span class="t" style="left:834.30px;top:490px;color:#242424;transform:scaleX(0.8951)">HDB</span>
<span class="t" style="left:906.60px;top:490px;color:#242424;transform:scaleX(0.9181)">MHARING</span>
<span class="t" style="left:977.70px;top:490px;color:#242424;transform:scaleX(1.0239)">04.12.202...</span>
<span class="t" style="left:280.30px;top:510px;color:#242424;transform:scaleX(0.8622)">PROD</span>
<span class="t" style="left:545.60px;top:510px;color:#242424;transform:scaleX(0.8738)">CALV</span>
<span class="t" style="left:617.10px;top:510px;color:#242424;transform:scaleX(0.9051)">PO_WORK...</span>
<span class="t" style="left:689.10px;top:510px;color:#242424;transform:scaleX(0.9051)">PO_WORK...</span>
<span class="t" style="left:760.70px;top:510px;color:#242424;transform:scaleX(1.0014)">sap.hana.d...</span>
<span class="t" style="left:834.30px;top:510px;color:#242424;transform:scaleX(0.8951)">HDB</span>
<span class="t" style="left:906.60px;top:510px;color:#242424;transform:scaleX(0.9181)">MHARING</span>
<span class="t" style="left:977.90px;top:510px;color:#242424;transform:scaleX(1.0101)">04.09.202...</span>
<span class="t" style="left:280.30px;top:530px;color:#242424;transform:scaleX(0.8622)">PROD</span>
<span class="t" style="left:545.60px;top:530px;color:#242424;transform:scaleX(0.8738)">CALV</span>
<span class="t" style="left:617.10px;top:530px;color:#242424;transform:scaleX(0.8734)">PURCHASE...</span>
<span class="t" style="left:689.10px;top:530px;color:#242424;transform:scaleX(0.8734)">PURCHASE...</span>
<span class="t" style="left:760.70px;top:530px;color:#242424;transform:scaleX(1.0014)">sap.hana.d...</span>
<span class="t" style="left:834.30px;top:530px;color:#242424;transform:scaleX(0.8951)">HDB</span>
<span class="t" style="left:906.60px;top:530px;color:#242424;transform:scaleX(0.9181)">MHARING</span>
<span class="t" style="left:977.90px;top:530px;color:#242424;transform:scaleX(1.0101)">04.09.202...</span>
<span class="t" style="left:280.30px;top:550px;color:#242424;transform:scaleX(0.8622)">PROD</span>
<span class="t" style="left:545.60px;top:550px;color:#242424;transform:scaleX(0.8738)">CALV</span>
<span class="t" style="left:617.10px;top:550px;color:#242424;transform:scaleX(0.8734)">PURCHASE...</span>
<span class="t" style="left:689.10px;top:550px;color:#242424;transform:scaleX(0.8734)">PURCHASE...</span>
<span class="t" style="left:760.70px;top:550px;color:#242424;transform:scaleX(1.0014)">sap.hana.d...</span>
<span class="t" style="left:834.30px;top:550px;color:#242424;transform:scaleX(0.8951)">HDB</span>
<span class="t" style="left:906.60px;top:550px;color:#242424;transform:scaleX(0.9181)">MHARING</span>
<span class="t" style="left:977.90px;top:550px;color:#242424;transform:scaleX(1.0101)">04.09.202...</span>
<span class="t" style="left:280.30px;top:570px;color:#242424;transform:scaleX(0.8622)">PROD</span>
<span class="t" style="left:545.60px;top:570px;color:#242424;transform:scaleX(0.8738)">CALV</span>
<span class="t" style="left:616.70px;top:570px;color:#242424;transform:scaleX(0.8860)">SALES_OR...</span>
<span class="t" style="left:688.70px;top:570px;color:#242424;transform:scaleX(0.8860)">SALES_OR...</span>
<span class="t" style="left:760.70px;top:570px;color:#242424;transform:scaleX(1.0014)">sap.hana.d...</span>
<span class="t" style="left:834.30px;top:570px;color:#242424;transform:scaleX(0.8951)">HDB</span>
<span class="t" style="left:906.60px;top:570px;color:#242424;transform:scaleX(0.9181)">MHARING</span>
<span class="t" style="left:977.90px;top:570px;color:#242424;transform:scaleX(1.0101)">04.09.202...</span>
<span class="t" style="left:280.30px;top:590px;color:#242424;transform:scaleX(0.8622)">PROD</span>
<span class="t" style="left:545.60px;top:590px;color:#242424;transform:scaleX(0.8738)">CALV</span>
<span class="t" style="left:616.70px;top:590px;color:#242424;transform:scaleX(0.8860)">SALES_OR...</span>
<span class="t" style="left:688.70px;top:590px;color:#242424;transform:scaleX(0.8860)">SALES_OR...</span>
<span class="t" style="left:760.70px;top:590px;color:#242424;transform:scaleX(1.0014)">sap.hana.d...</span>
<span class="t" style="left:834.30px;top:590px;color:#242424;transform:scaleX(0.8951)">HDB</span>
<span class="t" style="left:906.60px;top:590px;color:#242424;transform:scaleX(0.9181)">MHARING</span>
<span class="t" style="left:977.90px;top:590px;color:#242424;transform:scaleX(1.0101)">04.09.202...</span>
<span class="t" style="left:280.30px;top:610px;color:#242424;transform:scaleX(0.8622)">PROD</span>
<span class="t" style="left:545.60px;top:610px;color:#242424;transform:scaleX(0.8738)">CALV</span>
<span class="t" style="left:616.70px;top:610px;color:#242424;transform:scaleX(0.8860)">SALES_OR...</span>
<span class="t" style="left:688.70px;top:610px;color:#242424;transform:scaleX(0.8860)">SALES_OR...</span>
<span class="t" style="left:760.70px;top:610px;color:#242424;transform:scaleX(1.0014)">sap.hana.d...</span>
<span class="t" style="left:834.30px;top:610px;color:#242424;transform:scaleX(0.8951)">HDB</span>
<span class="t" style="left:906.60px;top:610px;color:#242424;transform:scaleX(0.9181)">MHARING</span>
<span class="t" style="left:977.90px;top:610px;color:#242424;transform:scaleX(1.0101)">04.09.202...</span>
<div class="a" style="left:258px;top:620px;width:808px;height:3px;background:#a9a9a9;"></div>
</body></html>
